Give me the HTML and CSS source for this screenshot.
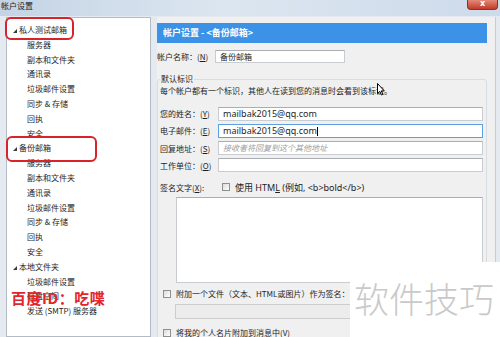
FILE: index.html
```html
<!doctype html>
<html lang="zh-CN">
<head>
<meta charset="UTF-8">
<title>帐户设置</title>
<link rel="stylesheet" href="styles.css">
</head>
<body>
<div class="window">
	<div class="titlebar">
		<span class="title">帐户设置</span>
		<span class="close">x</span>
	</div>
	<div class="body">
		<ul class="tree">
			<li class="top"><i class="arrow"></i>私人测试邮箱</li>
			<li class="sub">服务器</li>
			<li class="sub">副本和文件夹</li>
			<li class="sub">通讯录</li>
			<li class="sub">垃圾邮件设置</li>
			<li class="sub">同步 &amp; 存储</li>
			<li class="sub">回执</li>
			<li class="sub">安全</li>
			<li class="top"><i class="arrow"></i>备份邮箱</li>
			<li class="sub">服务器</li>
			<li class="sub">副本和文件夹</li>
			<li class="sub">通讯录</li>
			<li class="sub">垃圾邮件设置</li>
			<li class="sub">同步 &amp; 存储</li>
			<li class="sub">回执</li>
			<li class="sub">安全</li>
			<li class="top"><i class="arrow"></i>本地文件夹</li>
			<li class="sub">垃圾邮件设置</li>
			<li class="sub">磁盘空间</li>
			<li class="sub">发送 (SMTP) 服务器</li>
		</ul>
		<div class="panel">
			<div class="header">帐户设置 - &lt;备份邮箱&gt;</div>
			<div class="name-row">
				<label>帐户名称：(<u>N</u>)</label>
				<div class="input">备份邮箱</div>
			</div>
			<fieldset class="group">
				<legend>默认标识</legend>
				<p class="desc">每个帐户都有一个标识，其他人在读到您的消息时会看到该标识。</p>
				<div class="field first">
					<label>您的姓名：(<u>Y</u>)</label>
					<div class="input latin">mailbak2015@qq.com</div>
				</div>
				<div class="field">
					<label>电子邮件：(<u>E</u>)</label>
					<div class="input latin focus">mailbak2015@qq.com<span class="caret"></span></div>
				</div>
				<div class="field">
					<label>回复地址：(<u>S</u>)</label>
					<div class="input hint">接收者将回复到这个其他地址</div>
				</div>
				<div class="field">
					<label>工作单位：(<u>O</u>)</label>
					<div class="input"></div>
				</div>
				<div class="sig-row">
					<label>签名文字(<u>X</u>):</label>
					<span class="check"></span>
					<span class="latin">使用 HTM<u>L</u> (例如, &lt;b&gt;bold&lt;/b&gt;)</span>
				</div>
				<div class="sig-box"></div>
				<div class="check-row">
					<span class="check"></span>
					<span>附加一个文件（文本、HTML或图片）作为签名：</span>
				</div>
				<div class="file-box"></div>
				<div class="check-row last">
					<span class="check"></span>
					<span>将我的个人名片附加到消息中(V)</span>
				</div>
			</fieldset>
		</div>
	</div>

	<div class="mark mark-one"></div>
	<div class="mark mark-two"></div>
	<div class="stamp">百度ID：吃喋</div>
	<div class="brand">软件技巧</div>
	<svg class="pointer" width="8" height="13" viewBox="0 0 8 13">
		<path d="M0.5 0.5 L0.5 10.5 L2.8 8.4 L4.4 12 L5.8 11.4 L4.3 7.9 L7.3 7.9 Z" fill="#fff" stroke="#000" stroke-width="1"/>
	</svg>
</div>
</body>
</html>
```
FILE: styles.css
```css
*{
	margin: 0;
	padding: 0;
	box-sizing: border-box;
}
body{
	width: 500px;
	height: 337px;
	overflow: hidden;
	font-family: "Noto Sans CJK SC", sans-serif;
	font-size: 8px;
	color: #1e1e1e;
}
.window{
	position: relative;
	width: 500px;
	height: 337px;
	display: flex;
	flex-direction: column;
	background: #e4eaf0;
}
.titlebar{
	height: 16px;
	display: flex;
	justify-content: space-between;
	align-items: flex-start;
	background: linear-gradient(to right, #c4d4e5, #dce6f0 45%, #cddaea);
}
.title{
	font-size: 8px;
	line-height: 12px;
	padding-left: 1px;
	color: #222;
}
.close{
	width: 31px;
	height: 10px;
	margin-right: 2px;
	background: linear-gradient(#e08a78, #c43a27);
	border: 1px solid #8a3224;
	border-top: 0;
	border-radius: 0 0 4px 4px;
	color: #fff;
	font: bold 8px/8px "DejaVu Sans", sans-serif;
	text-align: center;
}
.body{
	flex: 1;
	min-height: 0;
	display: flex;
	gap: 6px;
	padding: 1px 4px 0 6px;
}

/* tree */
.tree{
	width: 145px;
	flex: none;
	background: #fff;
	border: 1px solid #b3bcc6;
	padding-top: 5px;
	overflow: hidden;
	list-style: none;
}
.tree li{
	height: 14.8px;
	line-height: 14.8px;
	white-space: nowrap;
}
.tree .top{
	padding-left: 6px;
}
.tree .sub{
	padding-left: 20px;
}
.arrow{
	display: inline-block;
	width: 0;
	height: 0;
	border-left: 4px solid transparent;
	border-bottom: 4px solid #3a3a3a;
	margin-right: 2px;
	vertical-align: middle;
}

/* right side */
.panel{
	flex: 1;
	min-width: 0;
	display: flex;
	flex-direction: column;
	padding: 6px 8px 0 0;
	background: #f0f0f0;
	border-right: 1px solid #c5ccd3;
	overflow: hidden;
}
.header{
	height: 20px;
	line-height: 20px;
	padding-left: 6px;
	background: #3b92e6;
	color: #fff;
	font-size: 9px;
	font-weight: bold;
}
.name-row{
	display: flex;
	align-items: center;
	height: 13px;
	margin-top: 7px;
}
.name-row label{
	width: 58px;
}
.name-row .input{
	width: 130px;
	height: 13px;
}
.input{
	background: #fff;
	border: 1px solid #c9ccd1;
	border-top-color: #abadb3;
	padding-left: 4px;
	line-height: 12px;
	white-space: nowrap;
	overflow: hidden;
}
.latin{
	font-family: "Noto Sans", "Noto Sans CJK SC", sans-serif;
	font-size: 9px;
}
.focus{
	border-color: #5d9fe0;
}
.caret{
	display: inline-block;
	width: 1px;
	height: 9px;
	background: #000;
	vertical-align: middle;
}
.hint{
	color: #a0a0a0;
	font-style: italic;
}

.group{
	margin-top: 11px;
	min-width: 0;
	flex: none;
	height: 300px;
	border: 1px solid #d6dde3;
	border-radius: 3px;
	padding: 0 3px 0 2px;
}
.group legend{
	padding: 0 1px;
	line-height: 10px;
}
.desc{
	margin-top: 1px;
	line-height: 12px;
}
.field{
	display: flex;
	align-items: center;
	height: 14px;
	margin-top: 3.3px;
}
.field.first{
	margin-top: 9.5px;
}
.field label{
	width: 58px;
	flex: none;
}
.field .input{
	flex: 1;
	height: 14px;
}
.sig-row{
	display: flex;
	align-items: center;
	height: 12px;
	margin-top: 9px;
}
.sig-row label{
	width: 62px;
}
.check{
	width: 8px;
	height: 8px;
	flex: none;
	border: 1px solid #8e8f8f;
	background: linear-gradient(135deg, #dcdcdc, #fff);
	margin-right: 5px;
}
.sig-box{
	height: 86px;
	margin: 3.6px 0 0 16px;
	background: #fff;
	border: 1px solid #c9ccd1;
	border-top-color: #abadb3;
}
.check-row{
	display: flex;
	align-items: center;
	height: 12px;
	margin-top: 5px;
	padding-left: 3px;
}
.check-row.last{
	margin-top: 8px;
}
.file-box{
	height: 15px;
	margin: 4px 0 0 15px;
	background: #ececec;
	border: 1px solid #cdcdcd;
}

/* overlays */
.mark{
	position: absolute;
	border: 2px solid #d8232a;
	border-radius: 6px;
}
.mark-one{
	left: 5px;
	top: 17px;
	width: 69px;
	height: 23px;
}
.mark-two{
	left: 6px;
	top: 136px;
	width: 91px;
	height: 26px;
}
.stamp{
	position: absolute;
	left: 11px;
	top: 289px;
	font-size: 15px;
	line-height: 18px;
	font-weight: bold;
	letter-spacing: 0.5px;
	color: #e3242b;
	white-space: nowrap;
}
.brand{
	position: absolute;
	left: 350px;
	top: 262px;
	width: 150px;
	height: 75px;
	background: #fff;
	padding: 18px 0 0 4px;
	font-size: 35px;
	line-height: 35px;
	font-weight: 300;
	color: #c9c9c9;
	white-space: nowrap;
}
.pointer{
	position: absolute;
	left: 377px;
	top: 83px;
}
```
